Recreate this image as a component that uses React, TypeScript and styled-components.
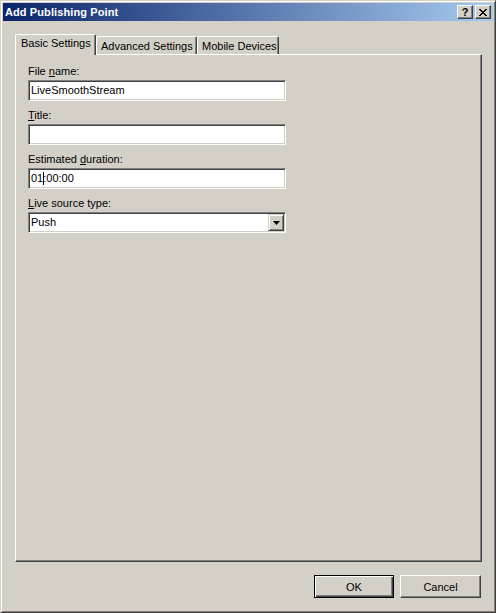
import React from 'react';
import styled, { createGlobalStyle } from 'styled-components';

const GlobalStyle = createGlobalStyle`
	html, body {
		margin: 0;
		padding: 0;
		background: #d4d0c8;
	}
	body {
		font-family: 'Liberation Sans', Arial, sans-serif;
		font-size: 11px;
		color: #000;
	}
`;

const Window = styled.div`
	box-sizing: border-box;
	display: flex;
	flex-direction: column;
	width: 496px;
	height: 613px;
	padding: 2px;
	background: #d4d0c8;
	border: 1px solid;
	border-color: #d4d0c8 #404040 #404040 #d4d0c8;
	box-shadow: inset 1px 1px #fff, inset -1px -1px #808080;
`;

const TitleBar = styled.div`
	display: flex;
	align-items: center;
	height: 18px;
	padding: 0 2px;
	background: linear-gradient(to right, #0a246a, #a6caf0);
`;

const TitleText = styled.h1`
	flex: 1;
	margin: 0;
	font-size: 11px;
	font-weight: bold;
	color: #fff;
	line-height: 18px;
	letter-spacing: 0.1px;
`;

const CaptionButton = styled.button`
	box-sizing: border-box;
	display: flex;
	justify-content: center;
	align-items: center;
	width: 16px;
	height: 14px;
	margin-left: 2px;
	padding: 0;
	background: #d4d0c8;
	border: 1px solid;
	border-color: #fff #404040 #404040 #fff;
	box-shadow: inset -1px -1px #808080;
	font-family: 'Liberation Sans', Arial, sans-serif;
	font-size: 11px;
	font-weight: bold;
	line-height: 12px;
	color: #000;
	svg {
		display: block;
	}
`;

const Body = styled.div`
	flex: 1;
	display: flex;
	flex-direction: column;
	padding: 13px 12px 13px 12px;
`;

const TabRow = styled.div`
	display: flex;
	align-items: flex-end;
	height: 20px;
	position: relative;
	z-index: 1;
`;

const Tab = styled.div<{ $active?: boolean; $width: number }>`
	box-sizing: border-box;
	width: ${(p) => p.$width}px;
	height: ${(p) => (p.$active ? 21 : 18)}px;
	margin-bottom: ${(p) => (p.$active ? -1 : 0)}px;
	padding: ${(p) => (p.$active ? '2px 0 0 5px' : '3px 0 0 4px')};
	background: #d4d0c8;
	border-top: 1px solid #fff;
	border-left: 1px solid #fff;
	border-right: 1px solid #404040;
	border-radius: 2px 2px 0 0;
	box-shadow: inset -1px 0 #808080;
	line-height: 13px;
	white-space: nowrap;
`;

const Panel = styled.div`
	box-sizing: border-box;
	width: 467px;
	height: 508px;
	padding: 10px 12px;
	display: flex;
	flex-direction: column;
	gap: 8px;
	border: 1px solid;
	border-color: #fff #404040 #404040 #fff;
	box-shadow: inset -1px -1px #808080;
`;

const Field = styled.div`
	display: flex;
	flex-direction: column;
	gap: 2px;
`;

const Label = styled.label`
	line-height: 13px;
	u {
		text-decoration: underline;
	}
`;

const Sunken = styled.div`
	box-sizing: border-box;
	display: flex;
	align-items: center;
	width: 258px;
	height: 21px;
	padding: 0 1px 0 2px;
	background: #fff;
	border: 1px solid;
	border-color: #808080 #fff #fff #808080;
	box-shadow: inset 1px 1px #404040, inset -1px -1px #d4d0c8;
	line-height: 13px;
`;

const Caret = styled.span`
	display: inline-block;
	width: 0;
	height: 13px;
	border-left: 1px solid #000;
	margin: 0 -1px 0 0;
	vertical-align: middle;
`;

const SelectText = styled.span`
	flex: 1;
`;

const DropButton = styled.span`
	box-sizing: border-box;
	display: flex;
	justify-content: center;
	align-items: center;
	width: 16px;
	height: 17px;
	background: #d4d0c8;
	border: 1px solid;
	border-color: #d4d0c8 #404040 #404040 #d4d0c8;
	box-shadow: inset 1px 1px #fff, inset -1px -1px #808080;
`;

const ButtonRow = styled.div`
	display: flex;
	justify-content: flex-end;
	gap: 6px;
	margin-top: 13px;
`;

const DialogButton = styled.button<{ $default?: boolean }>`
	box-sizing: border-box;
	width: ${(p) => (p.$default ? 80 : 81)}px;
	height: 23px;
	padding: 0;
	background: #d4d0c8;
	font-family: 'Liberation Sans', Arial, sans-serif;
	font-size: 11px;
	color: #000;
	border: 1px solid;
	border-color: ${(p) => (p.$default ? '#000' : '#fff #404040 #404040 #fff')};
	box-shadow: ${(p) =>
		p.$default
			? 'inset 1px 1px #fff, inset -1px -1px #404040, inset -2px -2px #808080'
			: 'inset -1px -1px #808080'};
`;

const App = () => {
	return (
		<>
			<GlobalStyle />
			<Window>
				<TitleBar>
					<TitleText>Add Publishing Point</TitleText>
					<CaptionButton aria-label="Help">?</CaptionButton>
					<CaptionButton aria-label="Close">
						<svg width="8" height="7" viewBox="0 0 8 7">
							<path d="M0 0h2v1h1v1h2V1h1V0h2v1H7v1H6v1H5v1h1v1h1v1h1v1H6V6H5V5H3v1H2v1H0V6h1V5h1V4h1V3H2V2H1V1H0z" fill="#000" />
						</svg>
					</CaptionButton>
				</TitleBar>
				<Body>
					<TabRow>
						<Tab $active $width={81}>Basic Settings</Tab>
						<Tab $width={101}>Advanced Settings</Tab>
						<Tab $width={82}>Mobile Devices</Tab>
					</TabRow>
					<Panel>
						<Field>
							<Label>
								File <u>n</u>ame:
							</Label>
							<Sunken>LiveSmoothStream</Sunken>
						</Field>
						<Field>
							<Label>
								<u>T</u>itle:
							</Label>
							<Sunken />
						</Field>
						<Field>
							<Label>
								Estimated <u>d</u>uration:
							</Label>
							<Sunken>
								01
								<Caret />
								:00:00
							</Sunken>
						</Field>
						<Field>
							<Label>
								<u>L</u>ive source type:
							</Label>
							<Sunken>
								<SelectText>Push</SelectText>
								<DropButton>
									<svg width="7" height="4" viewBox="0 0 7 4">
										<path d="M0 0h7L3.5 4z" fill="#000" />
									</svg>
								</DropButton>
							</Sunken>
						</Field>
					</Panel>
					<ButtonRow>
						<DialogButton $default>OK</DialogButton>
						<DialogButton>Cancel</DialogButton>
					</ButtonRow>
				</Body>
			</Window>
		</>
	);
};

export default App;
